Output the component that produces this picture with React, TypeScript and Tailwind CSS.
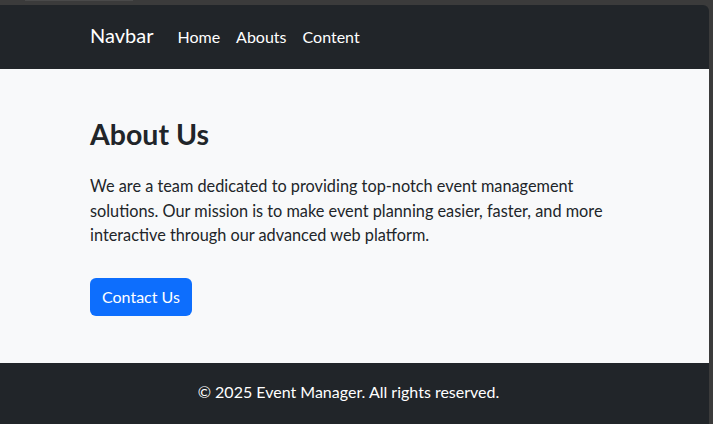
export default function App() {
  return (
    <div className="h-[424px] w-[713px] overflow-hidden bg-[#3b3b3b] flex flex-col font-['Lato',sans-serif]">
      <div className="h-[5px] shrink-0 flex">
        <div className="ml-[25px] w-[108px] h-[1px] bg-[#4a4a4a]" />
      </div>
      <div className="flex-1 mr-[4px] rounded-tr-[6px] overflow-hidden flex flex-col">
        <nav className="h-[64px] shrink-0 bg-[#212529] flex items-center pl-[90px]">
          <span className="text-[20px] leading-[30px] text-white mr-[16px] -mt-[4px]">Navbar</span>
          <ul className="flex text-white text-[16px] leading-[24px]">
            <li className="px-[8px]">Home</li>
            <li className="px-[8px]">Abouts</li>
            <li className="px-[8px]">Content</li>
          </ul>
        </nav>
        <main className="bg-[#f8f9fa] pt-[46px] pb-[47px] pl-[90px] text-[#212529]">
          <h1 className="text-[28.5px] leading-[39px] font-bold">About Us</h1>
          <p className="mt-[20px] w-[540px] text-[16.3px] leading-[24.5px]">
            We are a team dedicated to providing top-notch event management solutions. Our mission is to make event
            planning easier, faster, and more interactive through our advanced web platform.
          </p>
          <button className="mt-[30px] h-[38px] px-[12px] rounded-[6px] bg-[#0d6efd] text-white text-[16px]">
            Contact Us
          </button>
        </main>
        <footer className="flex-1 bg-[#212529] text-white text-[16px] flex justify-center pt-[17px] pr-[12px]">
          <p>© 2025 Event Manager. All rights reserved.</p>
        </footer>
      </div>
    </div>
  );
}
